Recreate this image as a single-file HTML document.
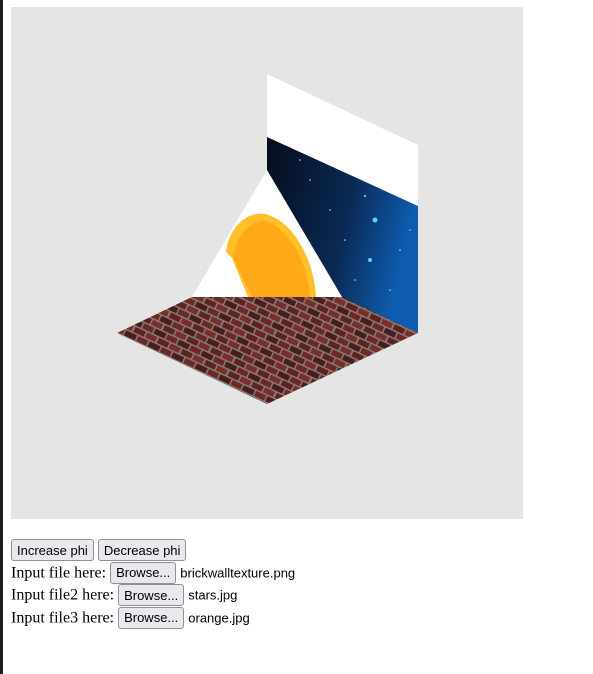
<!DOCTYPE html>
<html><head><style>
html,body{margin:0;padding:0;background:#fff;width:593px;height:674px;overflow:hidden}
.bar{position:absolute;left:0;top:0;width:3px;height:674px;background:#1e1e1e}
svg{position:absolute;left:11px;top:7px}
.ctl{position:absolute;left:11px;top:539px;font-family:"Liberation Serif",serif;font-size:16px;line-height:22px;color:#000}
button{font-family:"Liberation Sans",sans-serif;font-size:13px;padding:1px 5px;height:22px;background:#e9e9ed;border:1px solid #8f8f9d;border-radius:3px;color:#000;margin:0}
.f{font-family:"Liberation Sans",sans-serif;font-size:13px}
</style></head><body>
<div class="bar"></div>
<svg width="512" height="512" viewBox="11 7 512 512">
<defs>
<pattern id="br" width="26" height="14" patternUnits="userSpaceOnUse" patternTransform="rotate(25)">
<rect width="26" height="14" fill="#857a76"/>
<rect x="1" y="1" width="11.5" height="5.5" fill="#5e2220"/>
<rect x="14" y="1" width="11" height="5.5" fill="#7a2e2a"/>
<rect x="-5" y="8" width="11" height="5.5" fill="#4a1c1a"/>
<rect x="7.5" y="8" width="11" height="5.5" fill="#6d2826"/>
<rect x="20" y="8" width="11" height="5.5" fill="#4a1c1a"/>
</pattern>
<linearGradient id="st" x1="0" y1="0" x2="1" y2="0.3">
<stop offset="0" stop-color="#050c1c"/><stop offset="0.6" stop-color="#0a2a55"/><stop offset="1" stop-color="#0e5cb0"/>
</linearGradient>
<clipPath id="tri"><polygon points="267,170 192,297 342,297"/></clipPath>
</defs>
<rect x="11" y="7" width="512" height="512" fill="#e5e5e5"/>
<polygon points="267,74 418,145 418,333 267,262" fill="#fff"/>
<polygon points="267,137 418,206 418,333 267,262" fill="url(#st)"/>
<g fill="#cde">
<circle cx="375" cy="220" r="2.5" fill="#6cf"/><circle cx="370" cy="260" r="2" fill="#6cf"/>
<circle cx="365" cy="196" r="1"/><circle cx="310" cy="180" r="0.8"/><circle cx="330" cy="210" r="0.8"/>
<circle cx="400" cy="250" r="0.8"/><circle cx="345" cy="240" r="0.8"/><circle cx="390" cy="290" r="0.8"/>
<circle cx="300" cy="160" r="0.8"/><circle cx="355" cy="280" r="0.8"/><circle cx="410" cy="230" r="0.8"/>
</g>
<polygon points="267,170 192,297 342,297" fill="#fff"/>
<g clip-path="url(#tri)">
<path d="M226,252 C229,226 248,211 265,214 C292,220 314,258 316,297 L248,297 L232,258 Z" fill="#ffc02a"/>
<path d="M233,258 C236,234 251,221 265,221 C289,228 308,262 310,297 L252,297 Z" fill="#ffa818"/>
</g>
<polygon points="117,333 192,297 342,297 418,333 267,404" fill="url(#br)"/>
</svg>
<div class="ctl">
<div><button>Increase phi</button> <button>Decrease phi</button></div>
<div>Input file here: <button>Browse...</button> <span class="f">brickwalltexture.png</span></div>
<div>Input file2 here: <button>Browse...</button> <span class="f">stars.jpg</span></div>
<div>Input file3 here: <button>Browse...</button> <span class="f">orange.jpg</span></div>
</div>
</body></html>
